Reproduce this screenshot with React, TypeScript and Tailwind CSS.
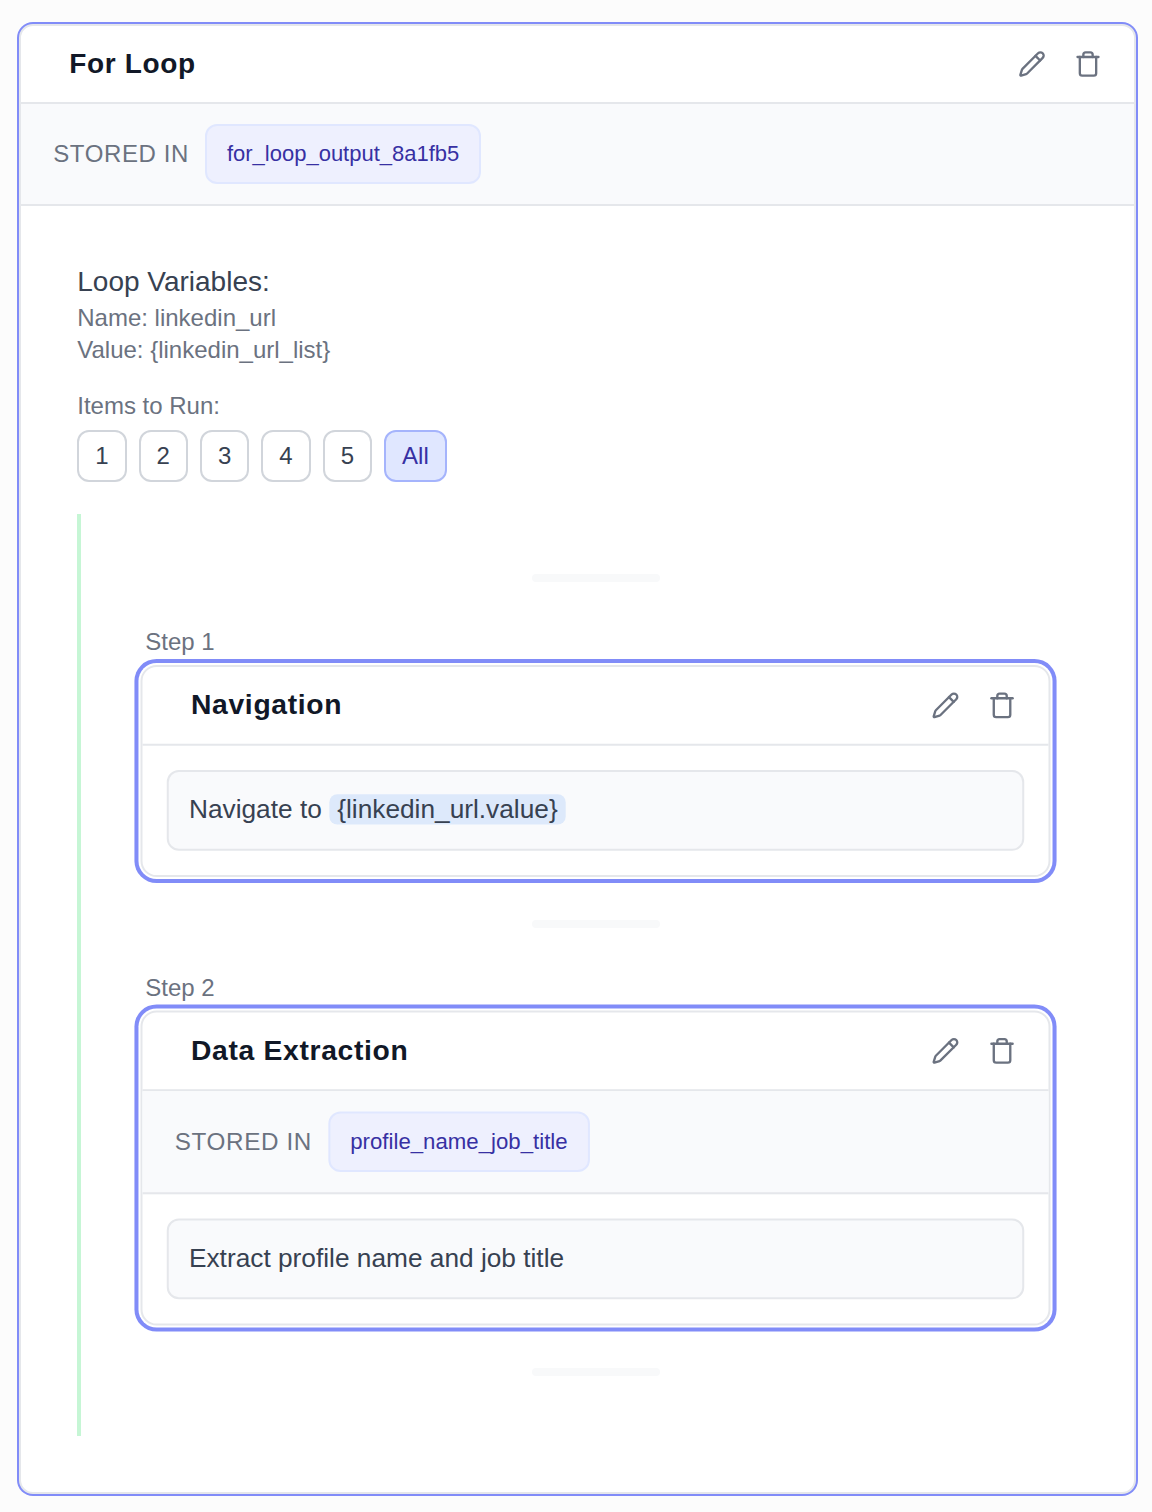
import type { ReactNode } from "react";
import { Pencil, Trash } from "lucide-react";

function CardHeader({ title }: { title: string }) {
  return (
    <div className="flex h-[78px] items-center justify-between border-b-2 border-[#e5e7eb] pr-8 pl-12">
      <h2 className="text-[28px] leading-10 font-bold tracking-[0.66px] text-[#111827]">{title}</h2>
      <div className="flex gap-7 text-[#6b7280]">
        <button aria-label="Edit">
          <Pencil size={28} strokeWidth={2} />
        </button>
        <button aria-label="Delete">
          <Trash size={28} strokeWidth={2} />
        </button>
      </div>
    </div>
  );
}

function StoredIn({ name }: { name: string }) {
  return (
    <div className="flex items-center gap-4 border-b-2 border-[#e5e7eb] bg-[#f9fafc] px-8 py-5">
      <span className="text-2xl leading-8 tracking-[0.6px] text-[#6b7280]">STORED IN</span>
      <span className="rounded-xl border-2 border-[#e0e7ff] bg-[#eef0fe] px-5 py-3 text-[22px] leading-8 text-[#3730a3]">
        {name}
      </span>
    </div>
  );
}

function Divider() {
  return <div className="mx-auto h-2 w-32 rounded-full bg-[#f8f9fa]" />;
}

function Step({
  index,
  title,
  output,
  children,
}: {
  index: number;
  title: string;
  output?: string;
  children: ReactNode;
}) {
  return (
    <div className="my-11">
      <div className="mb-2 text-2xl leading-8 text-[#6b7280]">Step {index}</div>
      <div className="scale-[1.01] transform rounded-2xl border-2 border-[#e5e7eb] bg-white ring-4 ring-[#818cf8] ring-offset-2 ring-offset-white">
        <CardHeader title={title} />
        {output && <StoredIn name={output} />}
        <div className="p-6">
          <div className="h-20 rounded-xl border-2 border-[#e5e7eb] bg-[#f9fafc] px-5 py-4 text-[26px] leading-[42px] text-[#374151]">
            {children}
          </div>
        </div>
      </div>
    </div>
  );
}

const counts = ["1", "2", "3", "4", "5", "All"];

export default function App() {
  return (
    <div className="h-[1512px] w-[1152px] bg-[#fcfcfc] pt-6 pl-[19.25px] font-['Liberation_Sans',Arial,sans-serif]">
      <div className="h-[1470px] w-[1117px] rounded-[14px] border-2 border-[#e5e7eb] bg-white ring-2 ring-[#818cf8]">
        <CardHeader title="For Loop" />
        <StoredIn name="for_loop_output_8a1fb5" />
        <div className="p-14">
          <h3 className="text-[28px] leading-10 text-[#374151]">Loop Variables:</h3>
          <p className="text-2xl leading-8 text-[#6b7280]">Name: linkedin_url</p>
          <p className="text-2xl leading-8 text-[#6b7280]">Value: {"{linkedin_url_list}"}</p>
          <p className="mt-6 mb-2 text-2xl leading-8 text-[#6b7280]">Items to Run:</p>
          <div className="flex gap-3">
            {counts.map((c) => (
              <button
                key={c}
                className={
                  c === "All"
                    ? "rounded-xl border-2 border-[#a5b4fc] bg-[#e0e7ff] px-4 py-2 text-2xl leading-8 text-[#3730a3]"
                    : "rounded-xl border-2 border-[#d1d5db] bg-white px-4 py-2 text-2xl leading-8 text-[#374151]"
                }
              >
                {c}
              </button>
            ))}
          </div>
          <div className="mt-8 border-l-4 border-[#c6f6d5] py-[60px] pr-8 pl-16">
            <Divider />
            <Step index={1} title="Navigation">
              Navigate to{" "}
              <span className="rounded-lg bg-[#dde9fb] px-2">{"{linkedin_url.value}"}</span>
            </Step>
            <Divider />
            <Step index={2} title="Data Extraction" output="profile_name_job_title">
              Extract profile name and job title
            </Step>
            <Divider />
          </div>
        </div>
      </div>
    </div>
  );
}
